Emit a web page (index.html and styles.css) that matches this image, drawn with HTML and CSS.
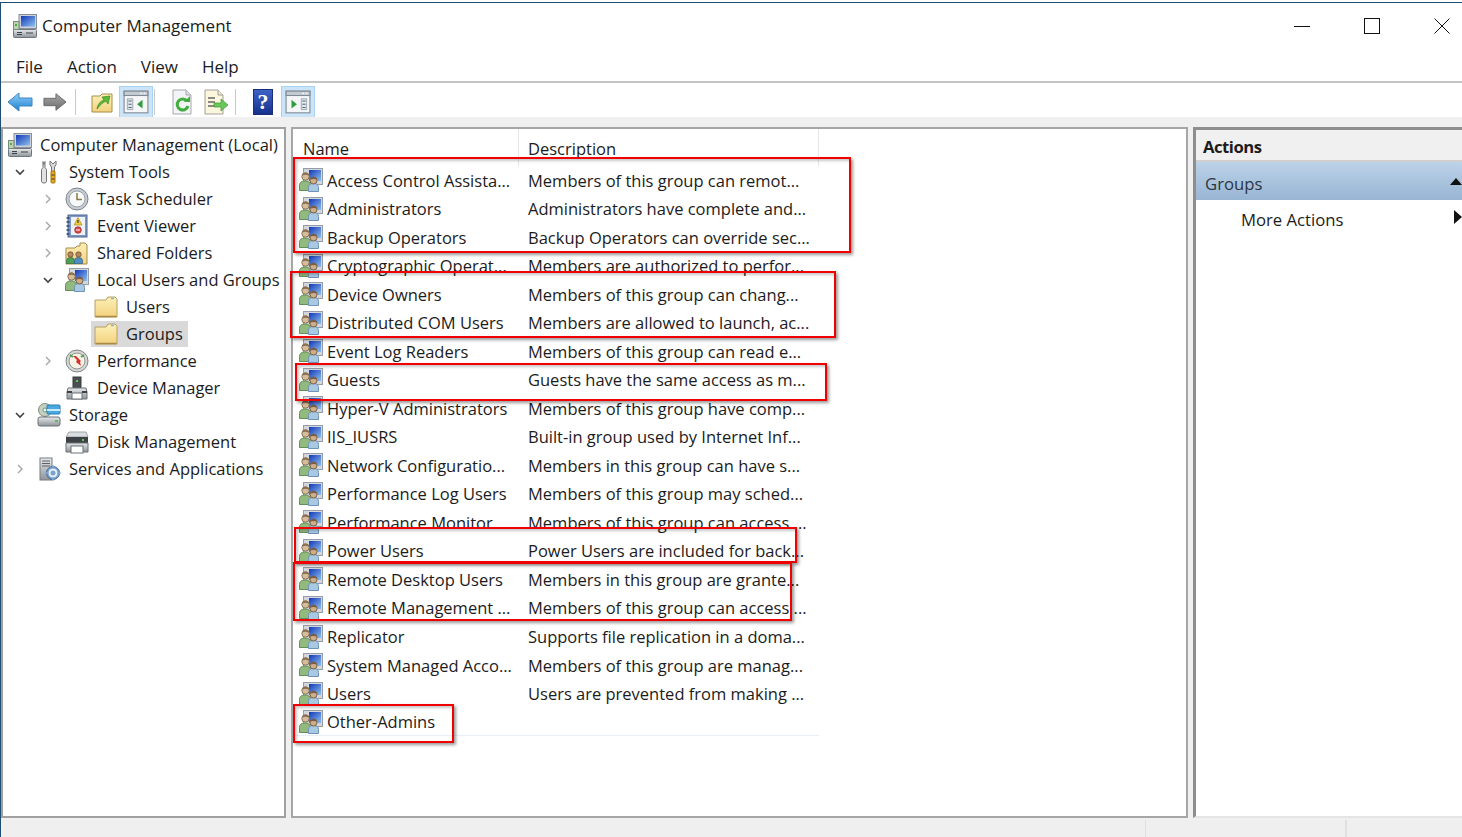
FILE: index.html
```html
<!DOCTYPE html>
<html lang="en">
<head>
<meta charset="utf-8">
<title>Computer Management</title>
<link rel="stylesheet" href="styles.css">
</head>
<body>
<svg class="sprite" aria-hidden="true">
  <defs>
    <linearGradient id="gScreen" x1="0" y1="0" x2="1" y2="1"><stop offset="0" stop-color="#1238b8"/><stop offset="1" stop-color="#8ec0ee"/></linearGradient>
    <linearGradient id="gFolder" x1="0" y1="0" x2="0" y2="1"><stop offset="0" stop-color="#fdf0b8"/><stop offset="1" stop-color="#f2d27e"/></linearGradient>
    <linearGradient id="gBack" x1="0" y1="0" x2="0" y2="1"><stop offset="0" stop-color="#8fd0f8"/><stop offset="1" stop-color="#1f7fd0"/></linearGradient>
    <linearGradient id="gFwd" x1="0" y1="0" x2="0" y2="1"><stop offset="0" stop-color="#a8a8a8"/><stop offset="1" stop-color="#6c6c6c"/></linearGradient>
    <linearGradient id="gHelp" x1="0" y1="0" x2="0" y2="1"><stop offset="0" stop-color="#3f63c8"/><stop offset="1" stop-color="#16308c"/></linearGradient>
    <linearGradient id="gMetal" x1="0" y1="0" x2="0" y2="1"><stop offset="0" stop-color="#e8eaec"/><stop offset="1" stop-color="#8d9399"/></linearGradient>

    <symbol id="users" viewBox="0 0 24 24">
      <rect x="4.500" y=".5" width="19" height="16" fill="#d3d7dd" stroke="#959da8"/>
      <rect x="10" y="2" width="12" height="11" fill="url(#gScreen)"/>
      <path d="M.5 22.500v-5q0-4.500 5.500-4.500t5.500 4.500v5z" fill="#93ba7e" stroke="#648f5b"/>
      <circle cx="6.500" cy="8.500" r="3.700" fill="#d6bc98" stroke="#8a7458"/>
      <path d="M3.500 7.500q.5-3 3-3t3 3q-3-1.300-6 0z" fill="#8b6f50"/>
      <path d="M9.500 23.500v-4q0-4 5-4t5 4v4z" fill="#a9c8e2" stroke="#6f93b5"/>
      <circle cx="14.500" cy="12.500" r="3.500" fill="#cfae8a" stroke="#7a6248"/>
      <path d="M11.500 11.500q.5-2.800 3-2.800t3 2.800q-3-1.200-6 0z" fill="#7a5e44"/>
    </symbol>

    <symbol id="computer" viewBox="0 0 24 24">
      <rect x="6" y="0.500" width="17.500" height="14" fill="#ccd1d8" stroke="#858e99"/>
      <rect x="8" y="2" width="14" height="10.500" fill="url(#gScreen)"/>
      <path d="M11 14h6v2h-6z" fill="#8d949c"/>
      <rect x="0.500" y="15.500" width="23" height="8" rx="1" fill="url(#gMetal)" stroke="#6f767d"/>
      <path d="M4 18.500h5M4 20.500h5M13 19h7" stroke="#3d4348" stroke-width="1.200"/>
      <rect x="0.500" y="7.500" width="5.500" height="8" fill="#bcd0b2" stroke="#7a8a78"/>
      <rect x="2" y="10" width="2" height="2" fill="#49b049"/>
    </symbol>

    <symbol id="tools" viewBox="0 0 24 24">
      <path d="M6 1.500v6l-1.500 2v12q0 1.500 2.500 1.500t2.500-1.500v-12l-1.500-2v-6l-1 3h-0.500z" fill="#dfe1e3" stroke="#777"/>
      <path d="M13 1l3 3 3-3q1 4-1.500 6v5h-3v-5q-2.500-2-1.500-6z" fill="#d7d9dc" stroke="#777"/>
      <rect x="14" y="11" width="4" height="12" rx="1" fill="#e7a91e" stroke="#a8750d"/>
      <path d="M14.500 15h3M14.500 19h3" stroke="#3a3a3a"/>
    </symbol>

    <symbol id="clock" viewBox="0 0 24 24">
      <circle cx="12" cy="12" r="11" fill="#c6ccd2" stroke="#7e858c"/>
      <circle cx="12" cy="12" r="8" fill="#f7f8fa" stroke="#9aa1a8"/>
      <path d="M12 6v6.500h5" fill="none" stroke="#8a7a48" stroke-width="1.500"/>
    </symbol>

    <symbol id="event" viewBox="0 0 24 24">
      <rect x="3" y="1" width="19" height="22" fill="#7f97c4" stroke="#4e6796"/>
      <rect x="6" y="3" width="14" height="18" fill="#eef1f6"/>
      <path d="M1.500 4h3M1.500 8h3M1.500 12h3M1.500 16h3M1.500 20h3" stroke="#30466e" stroke-width="1.400"/>
      <path d="M13 3.500l4 7.500h-8z" fill="#f2cf3a" stroke="#b08a16" stroke-width=".7"/>
      <path d="M13 6v3" stroke="#333" stroke-width="1.200"/>
      <circle cx="13" cy="16" r="3.300" fill="#d94a4a" stroke="#8e2626" stroke-width=".7"/>
      <path d="M11 16h4" stroke="#fff"/>
    </symbol>

    <symbol id="shared" viewBox="0 0 24 24">
      <path d="M1 7h9l2-2h3V2h5l2 2v19H1z" fill="url(#gFolder)" stroke="#a58b4a"/>
      <path d="M1.500 22.500v-3q0-3 4-3t4 3v3z" fill="#4aa05a" stroke="#2f6e3c" stroke-width=".7"/>
      <circle cx="5.500" cy="13.500" r="2.700" fill="#b8875c" stroke="#5f4630" stroke-width=".7"/>
      <path d="M9.500 22.500v-3q0-3 4-3t4 3v3z" fill="#4f8ec4" stroke="#2e5e8c" stroke-width=".7"/>
      <circle cx="13.500" cy="13.500" r="2.700" fill="#b8875c" stroke="#5f4630" stroke-width=".7"/>
    </symbol>

    <symbol id="folder" viewBox="0 0 24 24">
      <path d="M1 5h11l2-3h7l2 2v18H1z" fill="url(#gFolder)" stroke="#b7a062"/>
      <path d="M1.500 21.500h21" stroke="#a88a46" stroke-width="1.500"/>
      <path d="M17 3.500h3" stroke="#7db4e0" stroke-width="1.400"/>
    </symbol>

    <symbol id="perf" viewBox="0 0 24 24">
      <circle cx="12" cy="12" r="11" fill="#d5d8d6" stroke="#7f8583"/>
      <circle cx="12" cy="12" r="8" fill="#f6f3e6" stroke="#8e9490"/>
      <path d="M5 6l3 2M19 6l-3 2" stroke="#4ea04e" stroke-width="2"/>
      <path d="M8 7l4 4-1 2 5 4-1-4 1-1-5-5z" fill="#d6322c"/>
    </symbol>

    <symbol id="device" viewBox="0 0 24 24">
      <rect x="8" y="1" width="8" height="12" fill="#4c4f52" stroke="#383a3c"/>
      <rect x="11" y="4" width="2" height="2" fill="#53d05c"/>
      <path d="M3 12h18l1 4v7H2v-7z" fill="url(#gMetal)" stroke="#6d7278"/>
      <rect x="7" y="17" width="10" height="6" fill="#fff" stroke="#6d7278"/>
      <rect x="2" y="15" width="5" height="2" fill="#3e4246"/>
      <rect x="17" y="15" width="5" height="2" fill="#3e4246"/>
    </symbol>

    <symbol id="storage" viewBox="0 0 24 24">
      <circle cx="8" cy="7" r="6.500" fill="#c5d0c0" stroke="#7e8a7c"/>
      <circle cx="8" cy="7" r="2" fill="#f4f6f3" stroke="#6f9a6c"/>
      <rect x="10" y="2" width="13" height="9" rx="1" fill="#4aa9e0" stroke="#2a7db0"/>
      <path d="M10 7h13" stroke="#c9e8f8" stroke-width="2"/>
      <rect x="1" y="14" width="22" height="9" rx="2" fill="url(#gMetal)" stroke="#6d7278"/>
      <rect x="18" y="17" width="3" height="2" fill="#53c05c"/>
    </symbol>

    <symbol id="disk" viewBox="0 0 24 24">
      <path d="M4 2h17l2 5H1z" fill="#dadddf" stroke="#a0a5a9"/>
      <rect x="1" y="7" width="22" height="6" fill="#3d4145"/>
      <rect x="17" y="9" width="2" height="2" fill="#53d05c"/>
      <path d="M1 13h22v9H1z" fill="url(#gMetal)" stroke="#6d7278"/>
      <rect x="6" y="16" width="12" height="7" fill="#fff" stroke="#6d7278"/>
    </symbol>

    <symbol id="services" viewBox="0 0 24 24">
      <rect x="3" y="1" width="12" height="22" fill="url(#gMetal)" stroke="#767c82"/>
      <path d="M5 4h8M5 6.500h8M5 9h8" stroke="#5b6167"/>
      <circle cx="16" cy="16" r="6.500" fill="#7aa3cf" stroke="#3f6a9a"/>
      <circle cx="16" cy="16" r="3.500" fill="none" stroke="#e9f1f9" stroke-width="2"/>
      <path d="M16 8.500v3M16 20.500v3M8.500 16h3M20.500 16h3" stroke="#7aa3cf" stroke-width="2"/>
    </symbol>

    <symbol id="pane" viewBox="0 0 24 24">
      <rect x="1" y="2" width="22" height="20" fill="#f4f6f8" stroke="#7f8a94"/>
      <rect x="1" y="2" width="22" height="4" fill="#c5ccd3" stroke="#7f8a94"/>
      <path d="M16 4h1.500M19 4h1.500" stroke="#fff"/>
    </symbol>
  </defs>
</svg>

<div class="window">
  <header class="titlebar">
    <svg class="ico-title"><use href="#computer"/></svg>
    <span class="title-text">Computer Management</span>
    <div class="controls">
      <svg class="ctl" viewBox="0 0 16 16"><path d="M0 8.500h16" stroke="#111" fill="none"/></svg>
      <svg class="ctl" viewBox="0 0 16 16"><rect x=".5" y=".5" width="15" height="15" fill="none" stroke="#111"/></svg>
      <svg class="ctl" viewBox="0 0 16 16"><path d="M.5.500l15 15M15.500.500l-15 15" stroke="#111" fill="none"/></svg>
    </div>
  </header>

  <nav class="menubar">
    <span>File</span><span>Action</span><span>View</span><span>Help</span>
  </nav>

  <div class="toolbar">
    <button class="tb tb-arrow"><svg viewBox="0 0 26 22"><path d="M1 11L12 2v5h13v8H12v5z" fill="url(#gBack)" stroke="#3d86c4"/></svg></button>
    <button class="tb tb-arrow"><svg viewBox="0 0 26 22"><path d="M25 11L14 2v5H1v8h13v5z" fill="url(#gFwd)" stroke="#666"/></svg></button>
    <i class="sep sep-a"></i>
    <button class="tb tb-up"><svg viewBox="0 0 24 24"><path d="M2 6h8l2-2h10v18H2z" fill="url(#gFolder)" stroke="#a88e4c"/><path d="M7 19q1-7 7-9l-2-3 8-1-2 8-2-3q-5 2-9 8z" fill="#5cb83a" stroke="#3b8a22" stroke-width=".7"/></svg></button>
    <button class="tb tb-on"><svg viewBox="0 0 24 24"><use href="#pane"/><path d="M4 9h5v10H4z" fill="#dfe6ec" stroke="#7f8a94" stroke-width=".6"/><path d="M5 11h3M5 14h3M5 17h3" stroke="#5a6a78"/><path d="M18 10v8l-5-4z" fill="#2f9d3a"/></svg></button>
    <i class="sep sep-b"></i>
    <button class="tb tb-doc"><svg viewBox="0 0 22 26"><path d="M2 1h13l5 5v19H2z" fill="#f3f4f5" stroke="#a4a9ae"/><path d="M15 1v5h5" fill="#dde0e3" stroke="#a4a9ae"/><path d="M16 12a5.500 5.500 0 1 0 1 5" fill="none" stroke="#3fae3c" stroke-width="3"/><path d="M13 13h6V7z" fill="#3fae3c"/></svg></button>
    <button class="tb tb-exp"><svg viewBox="0 0 26 26"><path d="M2 1h13l5 5v19H2z" fill="#fbf6dc" stroke="#a4a098"/><path d="M15 1v5h5" fill="#ecead6" stroke="#a4a098"/><path d="M5 9h7M5 13h7M5 17h7" stroke="#666" stroke-width="1.300"/><path d="M11 14h7v-4l7 6-7 6v-4h-7z" fill="#69c65a" stroke="#3f9a36" stroke-width=".7"/></svg></button>
    <i class="sep sep-c"></i>
    <button class="tb tb-help"><svg viewBox="0 0 20 26"><rect x=".5" y=".5" width="19" height="25" fill="url(#gHelp)" stroke="#1b2f78"/><text x="10" y="20" text-anchor="middle" class="help-q">?</text></svg></button>
    <button class="tb tb-on tb-on-b"><svg viewBox="0 0 24 24"><use href="#pane"/><path d="M15 9h5v10h-5z" fill="#dfe6ec" stroke="#7f8a94" stroke-width=".6"/><path d="M16 11h3M16 14h3M16 17h3" stroke="#5a6a78"/><path d="M6 10v8l5-4z" fill="#2f9d3a"/></svg></button>
  </div>

  <main class="panes">
    <aside class="pane tree">
      <div class="node l0"><i class="caret"></i><div class="item"><svg class="ico"><use href="#computer"/></svg><span>Computer Management (Local)</span></div></div>
      <div class="node l1"><i class="caret"><svg viewBox="0 0 10 10"><path d="M1 3l4 4 4-4" class="chev-dark"/></svg></i><div class="item"><svg class="ico"><use href="#tools"/></svg><span>System Tools</span></div></div>
      <div class="node l2"><i class="caret"><svg viewBox="0 0 10 10"><path d="M3 1l4 4-4 4" class="chev"/></svg></i><div class="item"><svg class="ico"><use href="#clock"/></svg><span>Task Scheduler</span></div></div>
      <div class="node l2"><i class="caret"><svg viewBox="0 0 10 10"><path d="M3 1l4 4-4 4" class="chev"/></svg></i><div class="item"><svg class="ico"><use href="#event"/></svg><span>Event Viewer</span></div></div>
      <div class="node l2"><i class="caret"><svg viewBox="0 0 10 10"><path d="M3 1l4 4-4 4" class="chev"/></svg></i><div class="item"><svg class="ico"><use href="#shared"/></svg><span>Shared Folders</span></div></div>
      <div class="node l2"><i class="caret"><svg viewBox="0 0 10 10"><path d="M1 3l4 4 4-4" class="chev-dark"/></svg></i><div class="item"><svg class="ico"><use href="#users"/></svg><span>Local Users and Groups</span></div></div>
      <div class="node l3"><i class="caret"></i><div class="item"><svg class="ico"><use href="#folder"/></svg><span>Users</span></div></div>
      <div class="node l3"><i class="caret"></i><div class="item selected"><svg class="ico"><use href="#folder"/></svg><span>Groups</span></div></div>
      <div class="node l2"><i class="caret"><svg viewBox="0 0 10 10"><path d="M3 1l4 4-4 4" class="chev"/></svg></i><div class="item"><svg class="ico"><use href="#perf"/></svg><span>Performance</span></div></div>
      <div class="node l2"><i class="caret"></i><div class="item"><svg class="ico"><use href="#device"/></svg><span>Device Manager</span></div></div>
      <div class="node l1"><i class="caret"><svg viewBox="0 0 10 10"><path d="M1 3l4 4 4-4" class="chev-dark"/></svg></i><div class="item"><svg class="ico"><use href="#storage"/></svg><span>Storage</span></div></div>
      <div class="node l2"><i class="caret"></i><div class="item"><svg class="ico"><use href="#disk"/></svg><span>Disk Management</span></div></div>
      <div class="node l1"><i class="caret"><svg viewBox="0 0 10 10"><path d="M3 1l4 4-4 4" class="chev"/></svg></i><div class="item"><svg class="ico"><use href="#services"/></svg><span>Services and Applications</span></div></div>
    </aside>

    <section class="pane list">
      <div class="list-head"><span class="col-name">Name</span><span class="col-desc">Description</span></div>
      <div class="rows">
        <div class="row"><svg class="ico"><use href="#users"/></svg><span>Access Control Assista...</span><span>Members of this group can remot...</span></div>
        <div class="row"><svg class="ico"><use href="#users"/></svg><span>Administrators</span><span>Administrators have complete and...</span></div>
        <div class="row"><svg class="ico"><use href="#users"/></svg><span>Backup Operators</span><span>Backup Operators can override sec...</span></div>
        <div class="row"><svg class="ico"><use href="#users"/></svg><span>Cryptographic Operat...</span><span>Members are authorized to perfor...</span></div>
        <div class="row"><svg class="ico"><use href="#users"/></svg><span>Device Owners</span><span>Members of this group can chang...</span></div>
        <div class="row"><svg class="ico"><use href="#users"/></svg><span>Distributed COM Users</span><span>Members are allowed to launch, ac...</span></div>
        <div class="row"><svg class="ico"><use href="#users"/></svg><span>Event Log Readers</span><span>Members of this group can read e...</span></div>
        <div class="row"><svg class="ico"><use href="#users"/></svg><span>Guests</span><span>Guests have the same access as m...</span></div>
        <div class="row"><svg class="ico"><use href="#users"/></svg><span>Hyper-V Administrators</span><span>Members of this group have comp...</span></div>
        <div class="row"><svg class="ico"><use href="#users"/></svg><span>IIS_IUSRS</span><span>Built-in group used by Internet Inf...</span></div>
        <div class="row"><svg class="ico"><use href="#users"/></svg><span>Network Configuratio...</span><span>Members in this group can have s...</span></div>
        <div class="row"><svg class="ico"><use href="#users"/></svg><span>Performance Log Users</span><span>Members of this group may sched...</span></div>
        <div class="row"><svg class="ico"><use href="#users"/></svg><span>Performance Monitor ...</span><span>Members of this group can access ...</span></div>
        <div class="row"><svg class="ico"><use href="#users"/></svg><span>Power Users</span><span>Power Users are included for back...</span></div>
        <div class="row"><svg class="ico"><use href="#users"/></svg><span>Remote Desktop Users</span><span>Members in this group are grante...</span></div>
        <div class="row"><svg class="ico"><use href="#users"/></svg><span>Remote Management ...</span><span>Members of this group can access ...</span></div>
        <div class="row"><svg class="ico"><use href="#users"/></svg><span>Replicator</span><span>Supports file replication in a doma...</span></div>
        <div class="row"><svg class="ico"><use href="#users"/></svg><span>System Managed Acco...</span><span>Members of this group are manag...</span></div>
        <div class="row"><svg class="ico"><use href="#users"/></svg><span>Users</span><span>Users are prevented from making ...</span></div>
        <div class="row row-last"><svg class="ico"><use href="#users"/></svg><span>Other-Admins</span><span></span></div>
      </div>
      <div class="mark m1"></div>
      <div class="mark m2"></div>
      <div class="mark m3"></div>
      <div class="mark m4"></div>
      <div class="mark m5"></div>
      <div class="mark m6"></div>
    </section>

    <aside class="pane actions">
      <div class="act-head">Actions</div>
      <div class="act-group"><span>Groups</span><svg class="tri-up" viewBox="0 0 12 8"><path d="M0 8L6 1l6 7z"/></svg></div>
      <div class="act-item"><span>More Actions</span><svg class="tri-right" viewBox="0 0 8 14"><path d="M0 0l8 7-8 7z"/></svg></div>
    </aside>
  </main>

  <footer class="status"><i class="st st-a"></i><i class="st st-b"></i><i class="st st-c"></i></footer>
</div>
</body>
</html>
```
FILE: styles.css
```css
* { box-sizing: border-box; }
html, body { margin: 0; padding: 0; height: 100%; overflow: hidden; background: #fff; }
body {
  font-family: "Open Sans", "Liberation Sans", sans-serif;
  font-size: 17px;
  color: #1c1c1c;
  padding-top: 2px;
}
.sprite { position: absolute; width: 0; height: 0; }
.window {
  height: 835px;
  border-top: 1px solid #1f4e70;
  border-left: 1px solid #1f4e70;
  display: flex;
  flex-direction: column;
}

/* Title bar */
.titlebar { height: 51px; flex: none; display: flex; align-items: center; padding: 0 0 6px 12px; }
.ico-title { width: 24px; height: 24px; margin-right: 5px; }
.controls { margin-left: auto; display: flex; padding-right: 12px; gap: 54px; align-items: center; }
.ctl { width: 16px; height: 16px; display: block; }

/* Menu */
.menubar { box-sizing: content-box; height: 24px; flex: none; display: flex; gap: 24px; padding: 0 0 3px 15px; align-items: center; border-bottom: 2px solid #c4c6c6; }

/* Toolbar */
.toolbar { height: 34px; flex: none; display: flex; align-items: center; padding-top: 4px; }
.tb { border: 0; padding: 0; margin: 0; background: none; display: flex; align-items: center; justify-content: center; flex: none; }
.tb svg { display: block; }
.tb-arrow { width: 26px; height: 22px; margin-left: 6px; }
.tb-arrow svg { width: 26px; height: 22px; }
.tb-arrow + .tb-arrow { width: 24px; margin-left: 10px; }
.sep { width: 1px; height: 26px; background: #c9c9c9; flex: none; }
.sep-a { margin-left: 8px; }
.tb-up { width: 24px; height: 24px; margin-left: 14px; }
.tb-up svg { width: 24px; height: 24px; }
.tb-on { width: 34px; height: 33px; margin-left: 5px; background: #cce4f7; border: 1px solid #a8d3f3; }
.tb-on svg { width: 26px; height: 26px; }
.sep-b { margin-left: 1px; }
.tb-doc { width: 22px; height: 26px; margin-left: 16px; }
.tb-doc svg { width: 22px; height: 26px; }
.tb-exp { width: 26px; height: 26px; margin-left: 10px; }
.tb-exp svg { width: 26px; height: 26px; }
.sep-c { margin-left: 6px; }
.tb-help { width: 20px; height: 26px; margin-left: 17px; }
.tb-help svg { width: 20px; height: 26px; }
.help-q { fill: #fff; font-family: "Liberation Serif", serif; font-size: 22px; font-weight: 700; }
.tb-on-b { margin-left: 8px; }

/* Panes */
.panes { flex: 1; min-height: 0; display: flex; gap: 5px; background: #f0f0f0; padding: 10px 0 2px 0; }
.pane { background: #fff; border: 2px solid #a0a0a0; min-width: 0; }
.tree { width: 285px; flex: none; padding-top: 2px; overflow: hidden; font-size: 16.5px; }
.list { width: 897px; flex: none; position: relative; border-color: #a6a6a6; font-size: 16.5px; }
.actions { flex: 1; border-width: 3px 0 2px 3px; border-color: #8e8e8e; border-bottom-color: #e4e4e4; font-size: 16.7px; }

/* Tree */
.node { height: 27px; display: flex; align-items: center; white-space: nowrap; }
.caret { width: 26px; height: 10px; padding-left: 4px; flex: none; display: block; }
.caret svg { width: 10px; height: 10px; display: block; }
.chev { fill: none; stroke: #a6a6a6; stroke-width: 1.4; }
.chev-dark { fill: none; stroke: #404040; stroke-width: 1.6; }
.item { display: flex; align-items: center; gap: 8px; height: 26px; }
.ico { width: 24px; height: 24px; flex: none; display: block; }
.l0 { padding-left: 5px; }
.l0 .caret { width: 0; padding: 0; }
.l1 { padding-left: 8px; }
.l2 { padding-left: 36px; }
.l3 { padding-left: 65px; }
.selected { background: #d9d9d9; margin-left: -3px; padding: 0 5px 0 3px; }

/* List */
.list-head { height: 37px; display: flex; }
.list-head span { display: block; height: 37px; line-height: 40px; border-right: 1px solid #e6e6e6; flex: none; }
.col-name { width: 226px; padding-left: 10px; }
.col-desc { width: 300px; padding-left: 9px; }
.rows { width: 526px; }
.row { height: 28.53px; display: grid; grid-template-columns: 24px 197px 1fr; column-gap: 4px; padding-left: 6px; align-items: center; white-space: nowrap; }
.row-last { border-bottom: 1px solid #e8eff6; }

.mark { position: absolute; border: 2px solid #f00000; box-shadow: 2px 2px 3px rgba(0,0,0,.4), inset 2px 2px 3px rgba(0,0,0,.22); pointer-events: none; }
.m1 { left: 0; top: 28px; width: 558px; height: 96px; }
.m2 { left: -3px; top: 142px; width: 546px; height: 67px; }
.m3 { left: 2px; top: 234px; width: 532px; height: 38px; }
.m4 { left: 1px; top: 398px; width: 503px; height: 36px; }
.m5 { left: 0; top: 433px; width: 499px; height: 59px; }
.m6 { left: 0; top: 575px; width: 161px; height: 39px; }

/* Actions */
.act-head { box-sizing: content-box; height: 30px; background: #f0f0f0; border-bottom: 2px solid #d0d0d0; font-weight: 700; line-height: 33px; padding-left: 7px; letter-spacing: -0.5px; }
.act-group { height: 38px; background: linear-gradient(#bcd2e8, #98b5d3); display: flex; align-items: center; justify-content: space-between; padding: 5px 0 0 9px; color: #2b3642; }
.tri-up { width: 12px; height: 8px; display: block; fill: #111; margin-top: -6px; }
.act-item { height: 40px; display: flex; align-items: center; justify-content: space-between; padding: 0 0 2px 45px; }
.tri-right { width: 8px; height: 14px; display: block; fill: #111; margin-top: -4px; }

/* Status */
.status { height: 17px; flex: none; background: #efefef; display: flex; }
.st { display: block; border-right: 1px solid #e0e0e0; height: 100%; flex: none; }
.st-a { width: 1145px; }
.st-b { width: 200px; }
```
